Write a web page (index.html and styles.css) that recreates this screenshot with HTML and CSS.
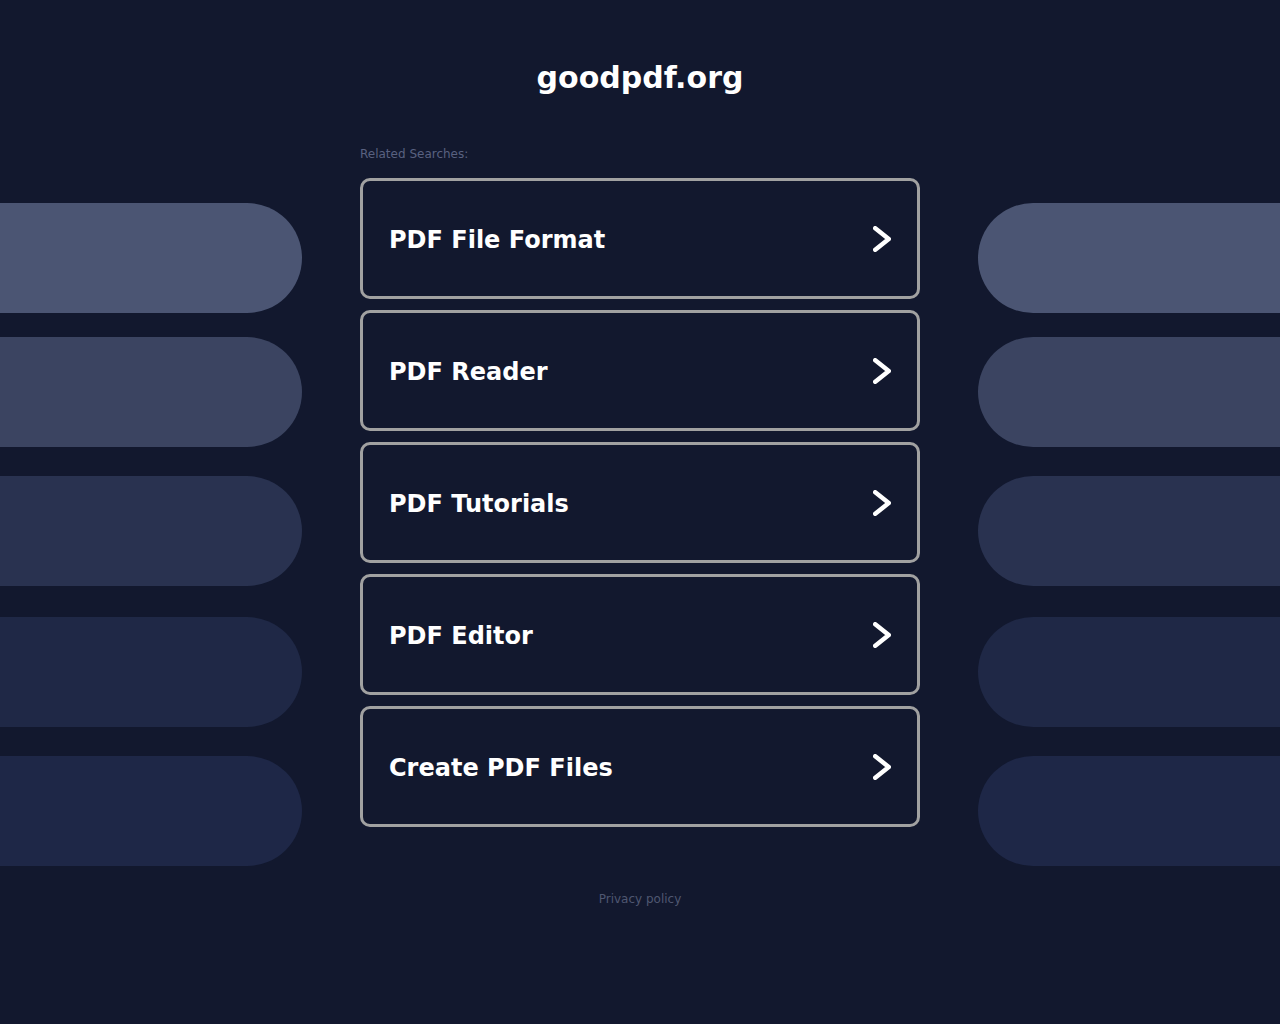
FILE: index.html
```html
<!DOCTYPE html>
<html lang="en">
<head>
    <meta charset="UTF-8">
    <title>goodpdf.org</title>
    <link rel="stylesheet" href="styles.css">
</head>
<body>

    <div class="header">goodpdf.org</div>

    <div class="layout">
        <!-- left decoration -->
        <div class="side left">
            <div class="pill p1"></div>
            <div class="pill p2"></div>
            <div class="pill p3"></div>
            <div class="pill p4"></div>
            <div class="pill p5"></div>
        </div>

        <div class="content">
            <div class="related">Related Searches:</div>
            <a class="card" href="#">
                <span>PDF File Format</span>
                <svg class="chevron" width="18" height="26" viewBox="0 0 18 26"><polyline points="2.25,2.25 15.75,13 2.25,23.75"/></svg>
            </a>
            <a class="card" href="#">
                <span>PDF Reader</span>
                <svg class="chevron" width="18" height="26" viewBox="0 0 18 26"><polyline points="2.25,2.25 15.75,13 2.25,23.75"/></svg>
            </a>
            <a class="card" href="#">
                <span>PDF Tutorials</span>
                <svg class="chevron" width="18" height="26" viewBox="0 0 18 26"><polyline points="2.25,2.25 15.75,13 2.25,23.75"/></svg>
            </a>
            <a class="card" href="#">
                <span>PDF Editor</span>
                <svg class="chevron" width="18" height="26" viewBox="0 0 18 26"><polyline points="2.25,2.25 15.75,13 2.25,23.75"/></svg>
            </a>
            <a class="card" href="#">
                <span>Create PDF Files</span>
                <svg class="chevron" width="18" height="26" viewBox="0 0 18 26"><polyline points="2.25,2.25 15.75,13 2.25,23.75"/></svg>
            </a>
        </div>

        <!-- right decoration -->
        <div class="side right">
            <div class="pill p1"></div>
            <div class="pill p2"></div>
            <div class="pill p3"></div>
            <div class="pill p4"></div>
            <div class="pill p5"></div>
        </div>
    </div>

    <div class="footer">
        <a href="#">Privacy policy</a>
    </div>

</body>
</html>
```

FILE: styles.css
```css
body {
    margin: 0;
    background-color: #12182e;
    font-family: "DejaVu Sans", Verdana, sans-serif;
    color: #fff;
}
.header {
    padding-top: 60px;
    font-size: 30px;
    line-height: 36px;
    font-weight: bold;
    text-align: center;
}
.layout {
    display: grid;
    grid-template-columns: 302px 560px 302px;
    column-gap: 58px;
    margin-top: 50px;
}
.side {
    display: flex;
    flex-direction: column;
    padding-top: 57px;
}
.pill {
    height: 110px;
}
.left .pill {
    border-radius: 0 55px 55px 0;
}
.right .pill {
    border-radius: 55px 0 0 55px;
}
.p1 { background-color: #4b5573; }
.p2 { background-color: #3b4461; margin-top: 24px; }
.p3 { background-color: #293250; margin-top: 29px; }
.p4 { background-color: #1f2846; margin-top: 31px; }
.p5 { background-color: #1e2747; margin-top: 29px; }

.related {
    font-size: 12px;
    line-height: 14px;
    color: #596180;
    margin-top: 1px;
    margin-bottom: 17px;
}
.card {
    display: flex;
    align-items: center;
    justify-content: space-between;
    height: 115px;
    padding: 0 26px;
    margin-bottom: 11px;
    border: 3px solid #a1a1a1;
    border-radius: 10px;
    color: #fff;
    text-decoration: none;
    font-size: 24px;
    font-weight: bold;
}
.card span {
    padding-top: 2px;
}
.chevron {
    margin-top: 1px;
}
.chevron polyline {
    fill: none;
    stroke: #fff;
    stroke-width: 4.5;
    stroke-linecap: round;
    stroke-linejoin: round;
}
.footer {
    margin-top: 26px;
    text-align: center;
    font-size: 12px;
    line-height: 14px;
}
.footer a {
    color: #4f5771;
    text-decoration: none;
}
```
